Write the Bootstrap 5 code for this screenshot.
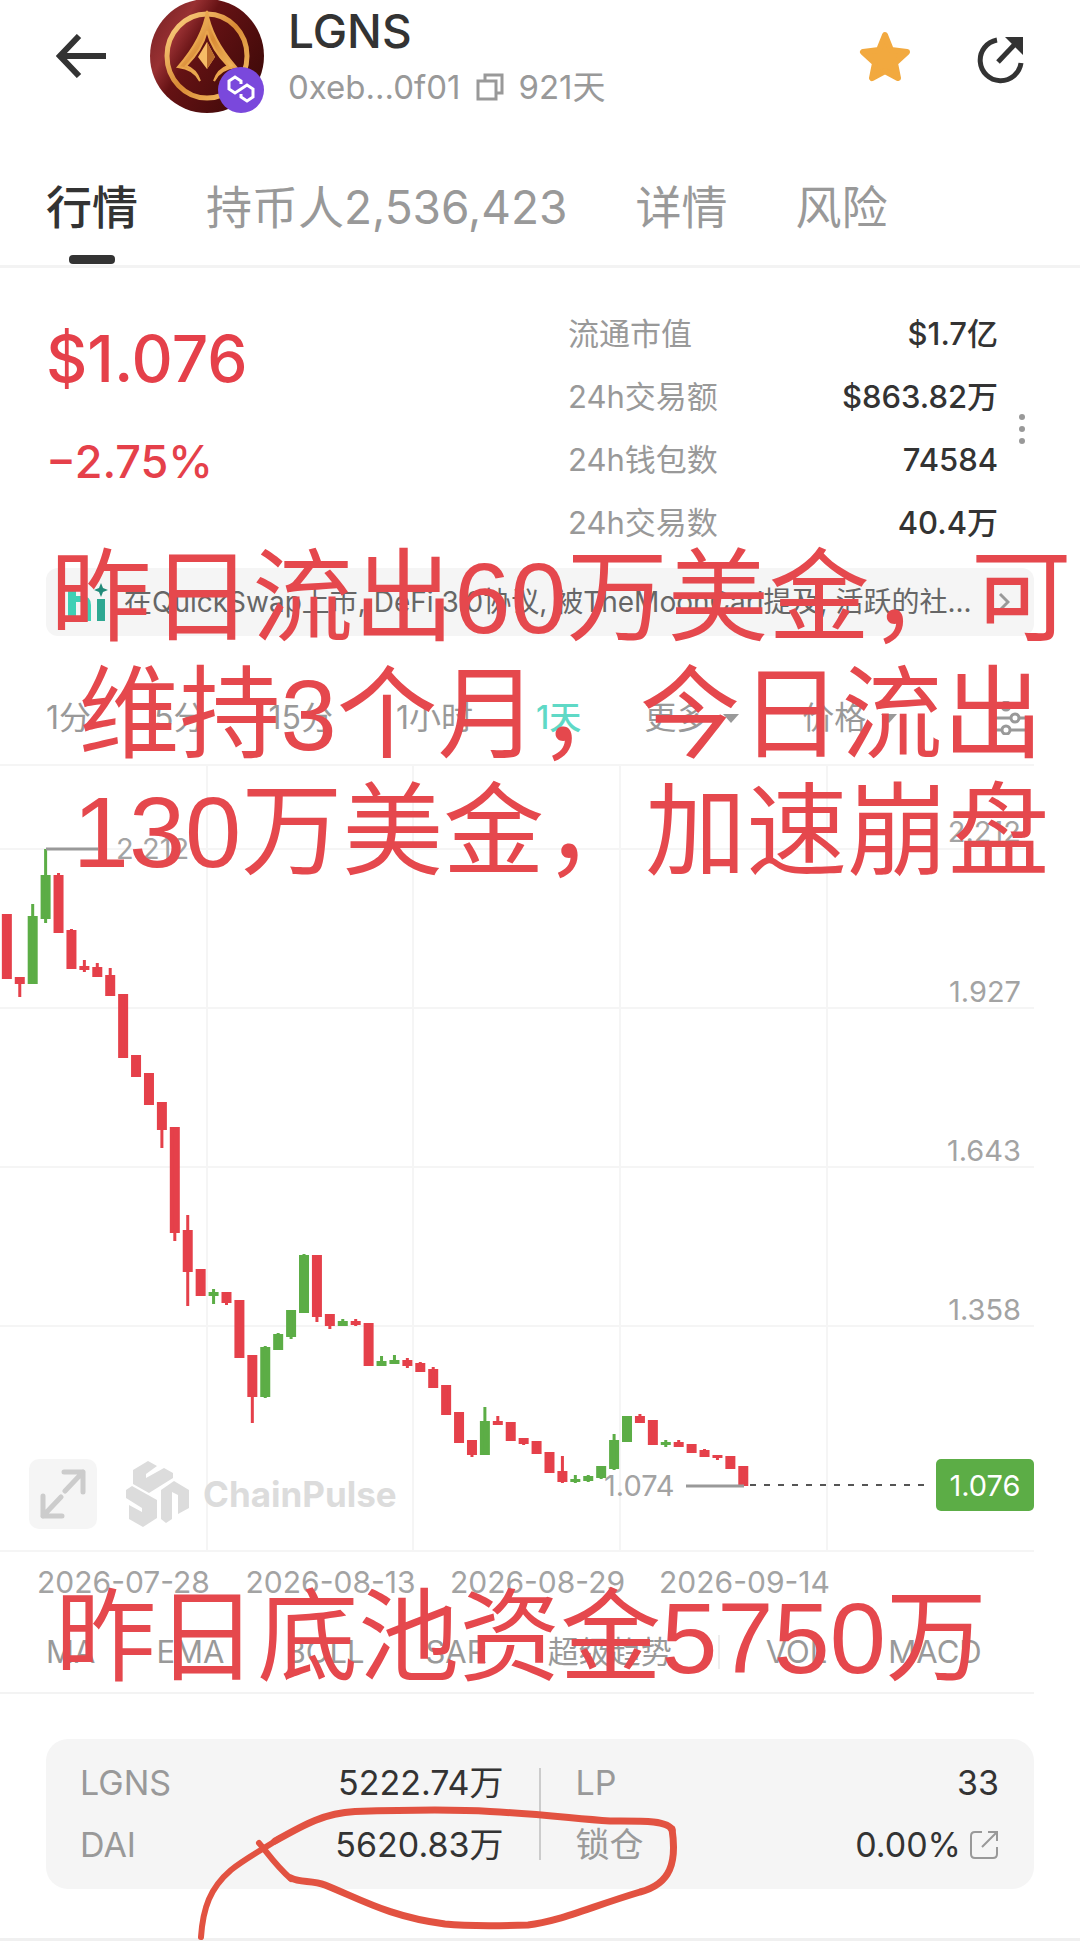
<!DOCTYPE html>
<html lang="zh-CN">
<head>
<meta charset="utf-8">
<meta name="viewport" content="width=device-width, initial-scale=1">
<title>LGNS 行情</title>
<link href="https://cdn.jsdelivr.net/npm/bootstrap@5.3.0/dist/css/bootstrap.min.css" rel="stylesheet">
<style>
:root{--ink:#333;--muted:#999;--fall:#e5404a;--rise:#5cad46;--panel:#f5f5f5;--rule:#f3f3f3;--edge:46px}
body{font-family:Inter,"Noto Sans CJK SC",sans-serif;color:var(--ink);background:#fff;font-size:31px}
button,select{font:inherit;color:inherit;background:none;border:0;padding:0;appearance:none}
a{color:inherit;text-decoration:none}
svg{display:block;flex:none}
.edge{padding-left:var(--edge);padding-right:var(--edge)}
.muted{color:var(--muted)}
.top-bar{margin-top:-2px;padding:0 56px 59px 56px}
.token-logo{width:114px;height:114px;margin-left:44px;margin-right:24px}
.token-text{padding-top:4px}
.token-name{font-size:46px;line-height:58px;font-weight:500}
.token-addr{font-size:33px;line-height:54px;gap:15px}
.main-tabs{gap:68px;border-bottom:3px solid var(--rule)}
.main-tabs a{font-size:46px;line-height:68px;padding-bottom:24px;color:var(--muted)}
.main-tabs a.active{color:var(--ink);font-weight:500;position:relative}
.main-tabs a.active::after{content:"";position:absolute;left:50%;bottom:1px;width:46px;height:9px;margin-left:-23px;border-radius:4px;background:var(--ink)}
.summary{padding-top:34px}
.price{font-size:64px;line-height:114px;font-weight:500;color:var(--fall)}
.change{font-size:45px;line-height:92px;font-weight:500;color:var(--fall)}
.stats{width:430px;margin-right:36px;font-size:31px;line-height:63px}
.stats dt{font-weight:400;color:var(--muted)}
.stats dd{font-weight:500;margin:0}
.more-dots{position:absolute;right:54px;top:146px}
.notice{margin:14px var(--edge) 0;height:68px;border-radius:12px;background:var(--panel);padding:0 24px 0 22px;font-size:28px;color:#666}
.periods{gap:63px;padding-top:60px;padding-bottom:24px;font-size:32px;line-height:44px;color:var(--muted)}
.periods .active{color:#5fd9c6;font-weight:500}
.pick{display:flex;align-items:center;gap:14px}
.pick::after{content:"";border:8px solid transparent;border-top:9px solid var(--muted);border-bottom:0}
.chart text{font-size:29px;fill:#a3a3a3}
.chart-tools{position:absolute;left:29px;bottom:24px;gap:14px}
.expand-btn{width:68px;height:70px;border-radius:10px;background:var(--panel);display:grid;place-items:center;margin-right:14px}
.brand-mark{font-size:35px;font-weight:700;color:#dcdcdc}
.dates{padding:11px 0 0 20px;font-size:30px;line-height:36px;color:#a3a3a3}
.dates span{flex:0 0 207px;text-align:center}
.indicators{gap:61px;padding-top:32px;padding-bottom:20px;line-height:40px;color:var(--muted)}
.indicators .bar{width:2px;height:34px;background:#eee;margin:0 -15px}
.cut{height:2px;background:var(--rule);margin-right:var(--edge)}
.pool{margin:45px var(--edge) 49px;padding:13px 35px 13px 34px;border-radius:22px;background:var(--panel);font-size:34px;line-height:62px}
.pool .half{flex:1 1 0}
.pool .split{width:2px;height:92px;background:#ccc;margin:0 35px}
.page-end{height:3px;background:#f0f0f0}
.note{position:absolute;left:42px;right:0;text-align:center;white-space:nowrap;pointer-events:none;font-family:"Liberation Sans","Noto Sans CJK SC",sans-serif;font-size:101px;line-height:117px;color:#e5484d;margin:0}
.note-flow{top:540px}
.note-pool{top:1580px;right:80px}
.scribble{position:absolute;left:190px;top:1800px;pointer-events:none}
</style>
<script src="https://cdn.jsdelivr.net/npm/bootstrap@5.3.0/dist/js/bootstrap.bundle.min.js"></script>
</head>
<body>
<main class="position-relative overflow-hidden">
<header class="top-bar d-flex align-items-center">
  <button type="button" aria-label="返回"><svg width="50" height="44" viewBox="0 0 50 44" fill="none" stroke="#333" stroke-width="6"><path d="M50 22H4M23 2L4 22l19 20"/></svg></button>
  <svg class="token-logo" viewBox="0 0 114 114" role="img" aria-label="LGNS">
    <defs>
      <linearGradient id="wine" x1="0" y1=".2" x2="1" y2=".8"><stop offset="0" stop-color="#7c2426"/><stop offset=".22" stop-color="#983032"/><stop offset=".38" stop-color="#651214"/><stop offset="1" stop-color="#3d0908"/></linearGradient>
      <linearGradient id="gold" x1="0" y1="0" x2="1" y2="1"><stop offset="0" stop-color="#ffd88a"/><stop offset=".5" stop-color="#d98a35"/><stop offset="1" stop-color="#f7c56a"/></linearGradient>
    </defs>
    <circle cx="57" cy="57" r="57" fill="url(#wine)"/>
    <ellipse cx="57" cy="57" rx="40" ry="42" fill="none" stroke="url(#gold)" stroke-width="5"/>
    <path d="M57 12C54 32 42 52 28 68c10 1 18 6 22 14-3-9-8-13-14-15 11-11 18-23 21-35 3 12 10 24 21 35-6 2-11 6-14 15 4-8 12-13 22-14C72 52 60 32 57 12z" fill="url(#gold)" stroke="#e9a54d" stroke-width="2"/>
    <path d="M57 43l8 15-8 12-9-12z" fill="#f6bc66"/><path d="M57 43l8 15-8 12z" fill="#b96a2c"/>
    <circle cx="91" cy="91" r="23" fill="#7a48dc"/>
    <path d="M91 85v-3l-6-4-6 4v8l6 4 12-8 6 4v8l-6 4-6-4v-3" fill="none" stroke="#fff" stroke-width="3"/>
  </svg>
  <div class="token-text flex-grow-1">
    <div class="token-name">LGNS</div>
    <div class="token-addr d-flex align-items-center muted"><span>0xeb...0f01</span>
      <button type="button" aria-label="复制地址"><svg width="28" height="28" viewBox="0 0 28 28" fill="none" stroke="#999" stroke-width="3"><path d="M2 8h18v18H2zM9 8V2h17v18h-6"/></svg></button>
      <span>921天</span></div>
  </div>
  <button type="button" aria-label="收藏" class="me-5"><svg width="54" height="52" viewBox="0 0 54 52"><path d="M27 5l6 15 16 2-12 11 3 15-13-7-13 7 3-15L5 22l16-2z" fill="#f2a93f" stroke="#f2a93f" stroke-width="6" stroke-linejoin="round"/></svg></button>
  <button type="button" aria-label="分享" class="ms-3 mt-2"><svg width="48" height="48" viewBox="0 0 48 48"><path d="M21 4a20.500 20.500 0 1 0 24 23" fill="none" stroke="#333" stroke-width="5"/><path d="M22 26L40 7" stroke="#333" stroke-width="5"/><path d="M29 1h18v18z" fill="#333"/></svg></button>
</header>
<nav class="main-tabs edge d-flex" aria-label="栏目">
  <a href="#market" class="active" aria-current="page">行情</a><a href="#holders">持币人2,536,423</a><a href="#detail">详情</a><a href="#risk">风险</a>
</nav>
<section id="market" class="summary edge d-flex justify-content-between position-relative">
  <div><div class="price">$1.076</div><div class="change">−2.75%</div></div>
  <dl class="stats mb-0">
    <div class="d-flex justify-content-between"><dt>流通市值</dt><dd>$1.7亿</dd></div>
    <div class="d-flex justify-content-between"><dt>24h交易额</dt><dd>$863.82万</dd></div>
    <div class="d-flex justify-content-between"><dt>24h钱包数</dt><dd>74584</dd></div>
    <div class="d-flex justify-content-between"><dt>24h交易数</dt><dd>40.4万</dd></div>
  </dl>
  <button type="button" class="more-dots" aria-label="更多数据"><svg width="8" height="30" viewBox="0 0 8 30" fill="#999"><circle cx="4" cy="3" r="3"/><circle cx="4" cy="15" r="3"/><circle cx="4" cy="27" r="3"/></svg></button>
</section>
<a href="#news" class="notice d-flex align-items-center">
  <svg width="40" height="38" viewBox="0 0 40 38" class="me-2"><path d="M0 38V2h8v11h6q9 0 9 9v16h-8V22q0-3-3-3H8v19z" fill="#3ed0b5"/><path d="M29 16h8v22h-8z" fill="#2fa892"/><path d="M33 0l2 5 5 2-5 2-2 5-2-5-5-2 5-2z" fill="#218a79"/></svg>
  <span class="flex-grow-1 ms-2 text-nowrap">在QuickSwap上市, DeFi 3.0协议, 被TheMoonCarl提及, 活跃的社...</span>
  <svg width="12" height="20" viewBox="0 0 12 20" fill="none" stroke="#999" stroke-width="3"><path d="M2 2l8 8-8 8"/></svg>
</a>
<div class="periods edge d-flex align-items-center">
  <button type="button">1分</button><button type="button">5分</button><button type="button">15分</button><button type="button">1小时</button><button type="button" class="active">1天</button>
  <span class="pick"><select aria-label="更多周期"><option>更多</option></select></span>
  <span class="pick"><select aria-label="图表数据"><option>价格</option></select></span>
  <button type="button" class="ms-auto me-2" aria-label="图表设置"><svg width="30" height="34" viewBox="0 0 30 34" fill="none" stroke="#999" stroke-width="3"><path d="M0 5h6M14 5h16M0 17h15M23 17h7M0 29h6M14 29h16"/><circle cx="10" cy="5" r="4"/><circle cx="19" cy="17" r="4"/><circle cx="10" cy="29" r="4"/></svg></button>
</div>
<div class="position-relative">
  <svg class="chart w-100" viewBox="0 0 1080 789" role="img" aria-label="LGNS 日线图">
    <path d="M0 1H1034M0 85H1034M0 244H1034M0 403H1034M0 562H1034M0 787H1034M207 0V788M413 0V788M620 0V788M827 0V788" stroke="#f5f5f5" stroke-width="2"/>
    <g id="candles"></g>
    <path d="M46 85h52M686 722h58" stroke="#999" stroke-width="3"/>
    <path d="M750 721H932" stroke="#555" stroke-width="2" stroke-dasharray="6 8"/>
    <text x="116" y="95">2.212</text><text x="604" y="732">1.074</text>
    <g text-anchor="end"><text x="1021" y="78">2.212</text><text x="1021" y="238">1.927</text><text x="1021" y="397">1.643</text><text x="1021" y="556">1.358</text></g>
    <rect x="936" y="695" width="98" height="52" rx="5" fill="#5cad46"/>
    <text x="985" y="732" text-anchor="middle" style="fill:#fff">1.076</text>
  </svg>
  <div class="chart-tools d-flex align-items-center">
    <button type="button" class="expand-btn" aria-label="全屏"><svg width="46" height="50" viewBox="0 0 46 50" fill="none" stroke="#ccc" stroke-width="5" stroke-linecap="round" stroke-linejoin="round"><path d="M24 3h19v20M43 3L25 22M3 27v20h19M3 47l18-19"/></svg></button>
    <svg width="64" height="68" viewBox="0 0 64 68" fill="#dcdcdc"><path d="M8 10L23 1l9 5-11 8v4l18-10 9 5v5L24 33 8 24zM1 30l6-4 25 14v18L18 67 4 59V45l13 7v-4L1 38zM36 30l13-9 15 9v18l-11 6V35l-6-3v27l-6 4-5-4z"/></svg>
    <span class="brand-mark">ChainPulse</span>
  </div>
</div>
<div class="dates d-flex"><span>2026-07-28</span><span>2026-08-13</span><span>2026-08-29</span><span>2026-09-14</span></div>
<div class="indicators edge d-flex align-items-center">
  <button type="button">MA</button><button type="button">EMA</button><button type="button">BOLL</button><button type="button">SAR</button><button type="button">超级趋势</button><span class="bar"></span><button type="button">VOL</button><button type="button">MACD</button>
</div>
<div class="cut"></div>
<section class="pool d-flex align-items-center">
  <div class="half">
    <div class="d-flex justify-content-between"><span class="muted">LGNS</span><span>5222.74万</span></div>
    <div class="d-flex justify-content-between"><span class="muted">DAI</span><span>5620.83万</span></div>
  </div>
  <div class="split"></div>
  <div class="half">
    <div class="d-flex justify-content-between"><span class="muted">LP</span><span>33</span></div>
    <div class="d-flex justify-content-between"><span class="muted">锁仓</span><a href="#lock" class="d-flex align-items-center gap-2">0.00%<svg width="30" height="30" viewBox="0 0 30 30" fill="none" stroke="#999" stroke-width="2"><path d="M13 2H6q-4 0-4 4v18q0 4 4 4h18q4 0 4-4v-7M19 2h9v9M28 2L13 17"/></svg></a></div>
  </div>
</section>
<div class="page-end"></div>
<p class="note note-flow">昨日流出60万美金，可<br>维持3个月，今日流出<br>130万美金，加速崩盘</p>
<p class="note note-pool">昨日底池资金5750万</p>
<svg class="scribble" width="500" height="145" viewBox="190 1800 500 145" fill="none" stroke="#e25241" stroke-linecap="round" stroke-linejoin="round">
  <path d="M201 1937C203 1908 210 1888 231 1870C246 1858 262 1850 280 1838" stroke-width="6"/>
  <path d="M275 1841C305 1824 325 1813 355 1811.500C400 1810 455 1809 490 1811.500C540 1814 570 1818 610 1821C640 1821 668 1820 672 1830" stroke-width="7"/>
  <path d="M672 1829C677 1862 671 1884 640 1892C590 1907 558 1922 528 1925C495 1926 465 1926 445 1924C390 1917 360 1899 325 1885C312 1880 300 1883 291 1878" stroke-width="7"/>
  <path d="M291 1879C275 1865 267 1852 259 1843" stroke-width="6"/>
</svg>
</main>
<script>
// One entry per day: direction, high, body top, body bottom, low, on the chart's vertical scale.
const days = [
["d",150,150,215,215],["d",213,213,220,233],["u",140,152,220,220],["u",85,111,155,159],["d",109,111,169,169],["d",165,166,205,205],["d",196,202,206,208],["d",199,203,213,213],["d",204,211,232,232],["d",230,230,294,294],
["d",291,291,313,313],["d",309,309,341,341],["d",338,338,366,384],["d",363,363,469,477],["d",451,466,508,542],["d",505,505,532,532],["u",525,528,532,540],["d",528,528,539,541],["d",536,536,594,594],["d",591,591,633,659],
["u",582,583,633,634],["u",569,570,586,586],["u",546,546,573,575],["u",490,491,549,549],["d",491,491,553,558],["d",550,550,562,565],["u",555,557,562,562],["d",555,557,561,562],["d",559,559,602,602],["u",592,597,602,602],
["u",591,596,600,600],["d",594,596,602,604],["d",598,599,608,608],["d",603,605,624,624],["d",621,621,651,651],["d",648,648,679,679],["d",676,676,691,693],["u",643,657,691,691],["d",652,657,661,661],["d",658,658,677,677],
["d",674,674,680,681],["d",677,677,690,690],["d",688,688,709,709],["d",692,707,718,719],["u",711,715,718,719],["u",711,712,717,718],["u",702,702,714,715],["u",670,676,705,706],["u",652,652,678,678],["d",650,652,659,659],
["d",656,656,681,681],["u",676,678,681,683],["d",676,678,683,683],["d",680,680,689,689],["d",685,686,693,693],["d",691,691,694,696],["d",692,692,705,705],["d",702,702,722,722]];
const step = 12.92, first = 6.85;
document.getElementById("candles").innerHTML = days.map(([dir,h,t,b,l],i)=>{
  const x = first + i*step, c = dir==="u" ? "#5cad46" : "#e5404a";
  return `<g fill="${c}"><rect x="${x-5}" y="${t}" width="10" height="${b-t}"/><rect x="${x-1.5}" y="${h}" width="3" height="${l-h}"/></g>`;
}).join("");
</script>
</body>
</html>
